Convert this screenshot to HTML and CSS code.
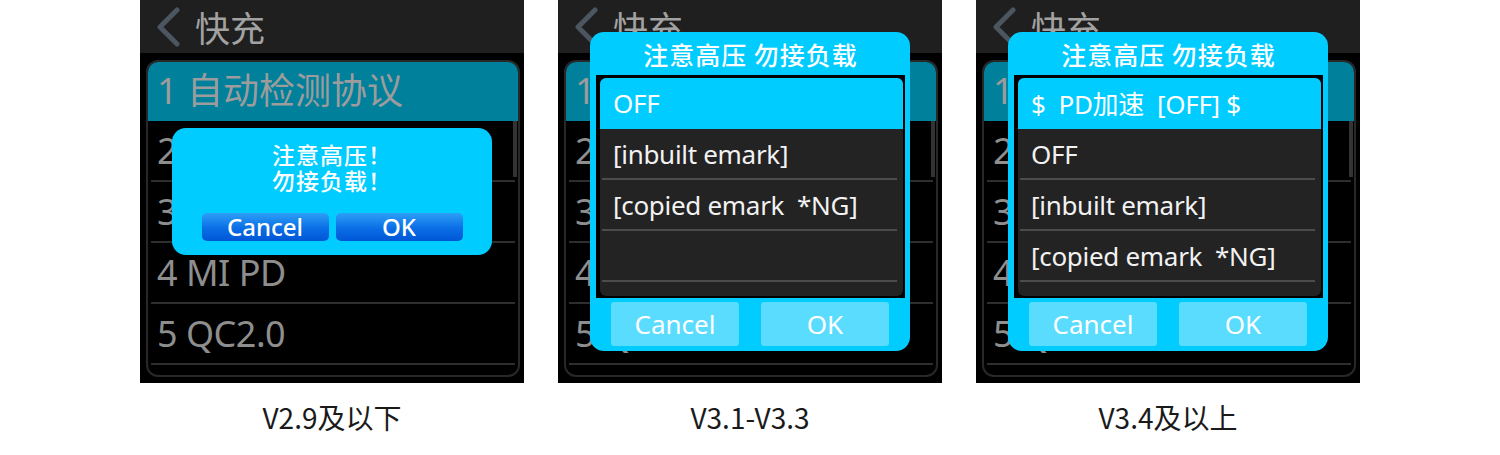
FILE: index.html
```html
<!DOCTYPE html>
<html lang="zh-CN">
<head>
<meta charset="utf-8">
<title>快充</title>
<link rel="stylesheet" href="styles.css">
</head>
<body>
<div class="page">
  <div class="figure">
    <div class="screen">
      <div class="header">
        <svg class="back" width="26" height="40" viewBox="0 0 26 40"><path d="M22 3 L5 20 L22 37" fill="none" stroke="#4b5660" stroke-width="5" stroke-linecap="round" stroke-linejoin="round"/></svg>
        <span class="title">快充</span>
      </div>
      <div class="panel">
        <div class="row active">1 自动检测协议</div>
        <div class="row">2</div>
        <div class="row">3</div>
        <div class="row">4 MI PD</div>
        <div class="row">5 QC2.0</div>
        <div class="scroll"></div>
      </div>
      <div class="dlg1">
        <div class="dlg1-text">注意高压！<br>勿接负载！</div>
        <div class="dlg1-btns">
          <div class="btn1">Cancel</div>
          <div class="btn1">OK</div>
        </div>
      </div>
    </div>
    <div class="caption">V2.9及以下</div>
  </div>

  <div class="figure">
    <div class="screen">
      <div class="header">
        <svg class="back" width="26" height="40" viewBox="0 0 26 40"><path d="M22 3 L5 20 L22 37" fill="none" stroke="#4b5660" stroke-width="5" stroke-linecap="round" stroke-linejoin="round"/></svg>
        <span class="title">快充</span>
      </div>
      <div class="panel">
        <div class="row active">1 自动检测协议</div>
        <div class="row">2</div>
        <div class="row">3</div>
        <div class="row">4 MI PD</div>
        <div class="row">5 QC2.0</div>
        <div class="scroll"></div>
      </div>
      <div class="dlg2">
        <div class="dlg2-title">注意高压 勿接负载</div>
        <div class="listbox">
          <div class="list">
            <div class="item sel">OFF</div>
            <div class="item">[inbuilt emark]</div>
            <div class="item">[copied emark&nbsp;&nbsp;*NG]</div>
            <div class="item"></div>
          </div>
        </div>
        <div class="dlg2-btns">
          <div class="btn2">Cancel</div>
          <div class="btn2">OK</div>
        </div>
      </div>
    </div>
    <div class="caption">V3.1-V3.3</div>
  </div>

  <div class="figure">
    <div class="screen">
      <div class="header">
        <svg class="back" width="26" height="40" viewBox="0 0 26 40"><path d="M22 3 L5 20 L22 37" fill="none" stroke="#4b5660" stroke-width="5" stroke-linecap="round" stroke-linejoin="round"/></svg>
        <span class="title">快充</span>
      </div>
      <div class="panel">
        <div class="row active">1 自动检测协议</div>
        <div class="row">2</div>
        <div class="row">3</div>
        <div class="row">4 MI PD</div>
        <div class="row">5 QC2.0</div>
        <div class="scroll"></div>
      </div>
      <div class="dlg2">
        <div class="dlg2-title">注意高压 勿接负载</div>
        <div class="listbox">
          <div class="list">
            <div class="item sel">$&nbsp;&nbsp;PD加速&nbsp;&nbsp;[OFF] $</div>
            <div class="item">OFF</div>
            <div class="item">[inbuilt emark]</div>
            <div class="item">[copied emark&nbsp;&nbsp;*NG]</div>
          </div>
        </div>
        <div class="dlg2-btns">
          <div class="btn2">Cancel</div>
          <div class="btn2">OK</div>
        </div>
      </div>
    </div>
    <div class="caption">V3.4及以上</div>
  </div>
</div>
</body>
</html>
```

FILE: styles.css
```css
html, body {
  margin: 0;
  padding: 0;
  background: #ffffff;
}

.page {
  display: flex;
  justify-content: center;
  gap: 34px;
}

.figure {
  width: 384px;
  display: flex;
  flex-direction: column;
  align-items: center;
}

.screen {
  width: 384px;
  height: 383px;
  background: #000;
  position: relative;
  overflow: hidden;
  font-family: "Noto Sans", "Noto Sans CJK SC", sans-serif;
}

.header {
  height: 53px;
  background: #1f1f1f;
  display: flex;
  align-items: center;
  padding-left: 15px;
  gap: 14px;
}

.back {
  display: block;
  margin-top: 1px;
}

.title {
  font-family: "Noto Sans CJK SC", sans-serif;
  font-size: 35px;
  color: #a2a2a2;
  line-height: 53px;
}

.panel {
  margin: 7px 4px 0 6px;
  height: 317px;
  border: 2px solid #282828;
  border-radius: 12px;
  box-sizing: border-box;
  overflow: hidden;
  position: relative;
}

.row {
  height: 61px;
  box-sizing: border-box;
  padding-left: 9px;
  padding-bottom: 2px;
  display: flex;
  align-items: center;
  font-size: 36px;
  color: #8e8e8e;
  position: relative;
  font-family: "Noto Sans", "Noto Sans CJK SC", sans-serif;
  letter-spacing: -0.5px;
}

.row::after {
  content: "";
  position: absolute;
  left: 3px;
  right: 3px;
  bottom: 0;
  height: 2px;
  background: #2e2e2e;
}

.row.active {
  background: #00809b;
  color: #9c9c9c;
  height: 60px;
  margin: -1px -1px 0 -1px;
  padding-left: 10px;
  padding-bottom: 5px;
  border-radius: 11px 11px 0 0;
  letter-spacing: 0;
}

.row.active::after {
  display: none;
}

.scroll {
  position: absolute;
  right: 1px;
  top: 59px;
  width: 4px;
  height: 56px;
  background: #333333;
}

/* Dialog V2.9 */
.dlg1 {
  position: absolute;
  left: 32px;
  top: 128px;
  width: 320px;
  height: 127px;
  background: #00ccff;
  border-radius: 14px;
  box-sizing: border-box;
  padding-top: 13px;
  display: flex;
  flex-direction: column;
  align-items: center;
}

.dlg1-text {
  font-family: "Noto Sans CJK SC", sans-serif;
  font-size: 23px;
  line-height: 26px;
  color: #fff;
  text-align: center;
  font-weight: 500;
  letter-spacing: 1px;
}

.dlg1-btns {
  margin-top: 20px;
  display: flex;
  gap: 7px;
}

.btn1 {
  width: 127px;
  height: 28px;
  border-radius: 5px;
  background: linear-gradient(#2d9ff6, #0a6ee6 55%, #0056d6);
  color: #fff;
  font-size: 24px;
  font-weight: 500;
  line-height: 28px;
  text-align: center;
}

/* Dialog V3.x */
.dlg2 {
  position: absolute;
  left: 32px;
  top: 32px;
  width: 320px;
  height: 319px;
  background: #00ccff;
  border-radius: 14px;
  box-sizing: border-box;
  padding: 0 5px 5px 6px;
  display: flex;
  flex-direction: column;
}

.dlg2-title {
  height: 43px;
  line-height: 45px;
  text-align: center;
  color: #fff;
  font-family: "Noto Sans CJK SC", sans-serif;
  font-size: 25px;
  font-weight: 500;
  letter-spacing: 1px;
}

.listbox {
  height: 223px;
  background: #000;
  padding: 3px 2px 2px 4px;
  box-sizing: border-box;
}

.list {
  height: 100%;
  background: #232323;
  border-radius: 6px;
  overflow: hidden;
}

.item {
  height: 51px;
  box-sizing: border-box;
  padding-left: 13px;
  padding-bottom: 1px;
  display: flex;
  align-items: center;
  font-size: 26px;
  color: #f2f2f2;
  position: relative;
  white-space: nowrap;
  letter-spacing: -0.3px;
}

.item::after {
  content: "";
  position: absolute;
  left: 2px;
  right: 6px;
  bottom: 0;
  height: 2px;
  background: #4c4c4c;
}

.item.sel {
  background: #00ccff;
  color: #fff;
}

.item.sel::after {
  display: none;
}

.dlg2-btns {
  display: flex;
  gap: 22px;
  padding-left: 15px;
  margin-top: 4px;
}

.btn2 {
  width: 128px;
  height: 44px;
  border-radius: 3px;
  background: #5adcff;
  color: #fff;
  font-size: 26px;
  line-height: 44px;
  text-align: center;
}

.caption {
  margin-top: 17px;
  font-family: "Noto Sans CJK SC", sans-serif;
  font-size: 28px;
  font-weight: 400;
  line-height: 34px;
  color: #1a1a1a;
}
```
